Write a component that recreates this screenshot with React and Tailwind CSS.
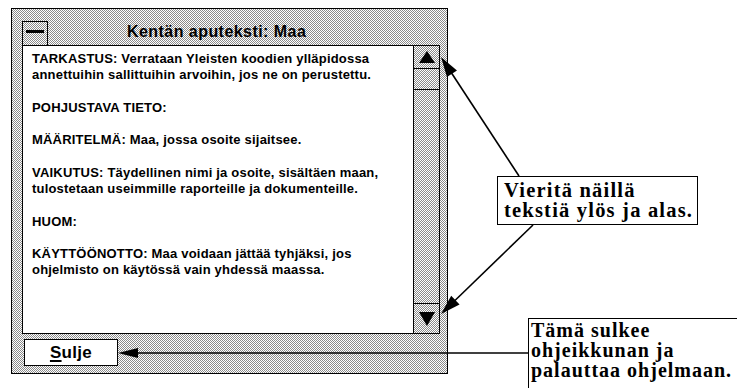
import React from "react";

function Arrow({ x1, y1, x2, y2, len = 20, w = 12, sw = 1.6 }) {
  const dx = x2 - x1;
  const dy = y2 - y1;
  const d = Math.hypot(dx, dy);
  const ux = dx / d;
  const uy = dy / d;
  const bx = x2 - ux * len;
  const by = y2 - uy * len;
  const nx = -uy;
  const ny = ux;
  const pts = `${x2},${y2} ${bx + (nx * w) / 2},${by + (ny * w) / 2} ${bx - (nx * w) / 2},${by - (ny * w) / 2}`;
  return (
    <g>
      <line x1={x1} y1={y1} x2={bx + ux * 2} y2={by + uy * 2} stroke="black" strokeWidth={sw} />
      <polygon points={pts} fill="black" />
    </g>
  );
}

export default function App() {
  return (
    <div className="relative w-[737px] h-[388px] overflow-hidden bg-white text-black font-['Liberation_Sans',Arial,sans-serif]">
      <div className="pl-[11px] pt-[8px]">
        <div className="w-[437px] h-[366px] border border-black bg-[repeating-conic-gradient(#8a8a8a_0%_25%,#ffffff_0%_50%)] bg-[length:2px_2px] pt-[12px] pl-[10px] pr-[7px] flex flex-col">
          <div className="flex h-[24px]">
            <div className="w-[26px] h-[24px] border-l border-t border-r border-black flex justify-center">
              <div className="mt-[8px] w-[18px] h-[3px] bg-black"></div>
            </div>
            <div className="ml-[79px] text-[16px] font-bold leading-[21px] tracking-[0.45px] whitespace-nowrap">Kentän aputeksti: Maa</div>
          </div>
          <div className="h-[289px] border border-black bg-white flex">
            <div className="flex-1 pl-[9px] pt-[5px] text-[13px] font-bold leading-[16.25px] tracking-[0.2px] whitespace-nowrap">
              <p>TARKASTUS: Verrataan Yleisten koodien ylläpidossa<br />annettuihin sallittuihin arvoihin, jos ne on perustettu.</p>
              <p className="mt-[16.25px]">POHJUSTAVA TIETO:</p>
              <p className="mt-[16.25px]">MÄÄRITELMÄ: Maa, jossa osoite sijaitsee.</p>
              <p className="mt-[16.25px]">VAIKUTUS: Täydellinen nimi ja osoite, sisältäen maan,<br />tulostetaan useimmille raporteille ja dokumenteille.</p>
              <p className="mt-[16.25px]">HUOM:</p>
              <p className="mt-[16.25px]">KÄYTTÖÖNOTTO: Maa voidaan jättää tyhjäksi, jos<br />ohjelmisto on käytössä vain yhdessä maassa.</p>
            </div>
            <div className="w-[26px] border-l border-black flex flex-col bg-[repeating-conic-gradient(#8a8a8a_0%_25%,#ffffff_0%_50%)] bg-[length:2px_2px]">
              <div className="h-[23px] border-b border-black flex items-center justify-center">
                <svg width="16" height="12" viewBox="0 0 16 12"><polygon points="8,0 16,12 0,12" fill="black" /></svg>
              </div>
              <div className="h-[21px] border-b border-black"></div>
              <div className="flex-1"></div>
              <div className="h-[30px] border-t border-black flex items-center justify-center">
                <svg width="16" height="14" viewBox="0 0 16 14"><polygon points="0,0 16,0 8,14" fill="black" /></svg>
              </div>
            </div>
          </div>
          <div className="mt-[5px] ml-[2px] w-[94px] h-[27px] border border-black bg-white flex items-center justify-center text-[17px] font-bold leading-[17px] tracking-[0.3px]">
            <span className="underline decoration-2 underline-offset-2">S</span>ulje
          </div>
        </div>
      </div>

      <div className="absolute left-[497px] top-[176px] w-[201px] h-[49px] border border-black bg-white flex flex-col pl-[6px] pt-[3px] font-['Liberation_Serif','Times_New_Roman',serif] font-bold text-[20.5px] leading-[20px] tracking-[1.2px] whitespace-nowrap">
        <span>Vieritä näillä</span>
        <span>tekstiä ylös ja alas.</span>
      </div>

      <div className="absolute left-[528px] top-[318px] w-[260px] h-[100px] border border-black bg-white pl-[2px] pt-[1px] font-['Liberation_Serif','Times_New_Roman',serif] font-bold text-[20px] leading-[20px] tracking-[1px] whitespace-nowrap">
        Tämä sulkee<br />ohjeikkunan ja<br />palauttaa ohjelmaan.
      </div>

      <svg className="absolute left-0 top-0 pointer-events-none" width="737" height="388" viewBox="0 0 737 388">
        <Arrow x1={519} y1={176} x2={441} y2={57} />
        <Arrow x1={533} y1={225} x2={441} y2={314} />
        <Arrow x1={528} y1={353} x2={118} y2={353} len={20} w={10} />
      </svg>
    </div>
  );
}
